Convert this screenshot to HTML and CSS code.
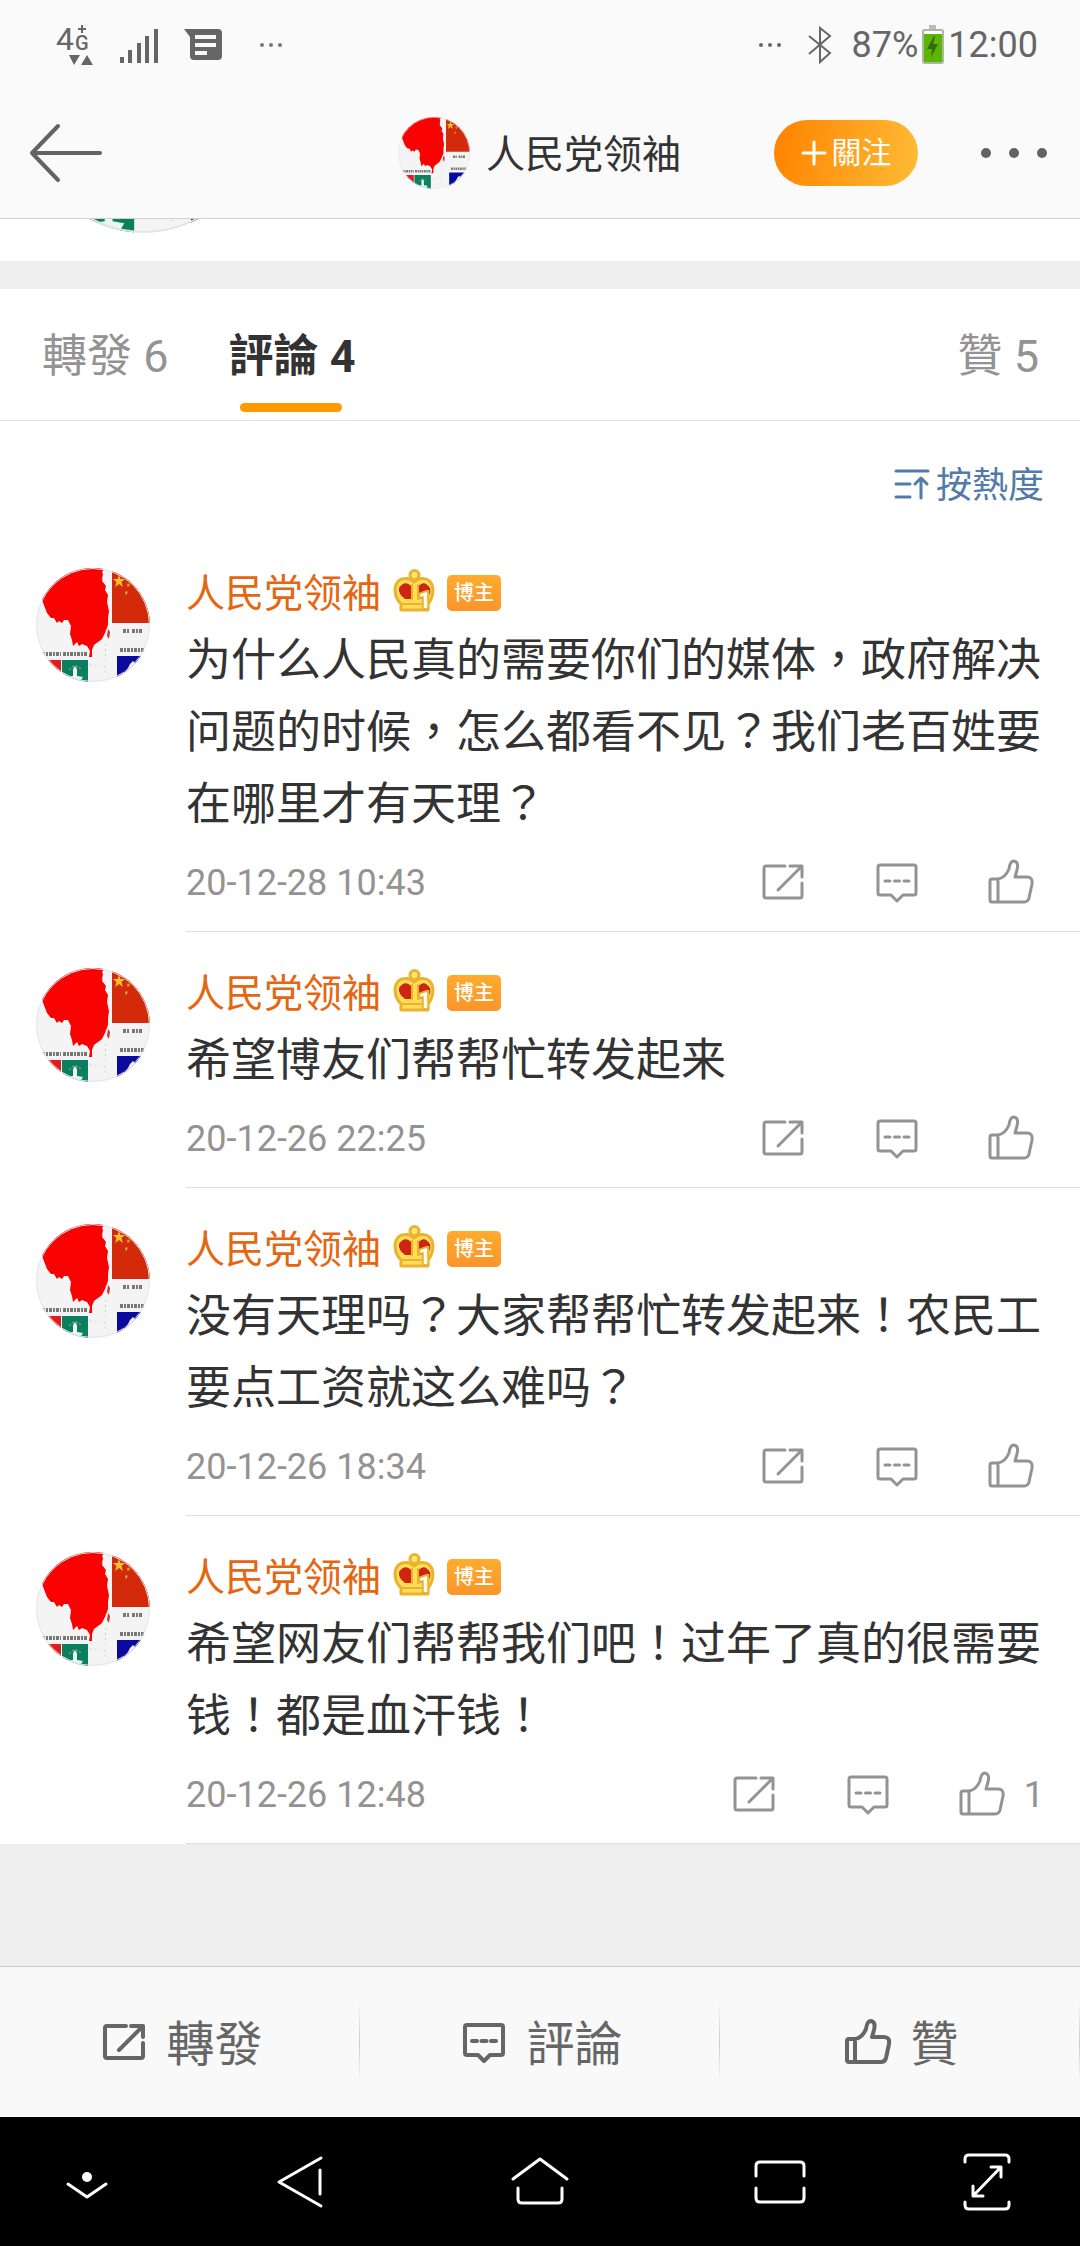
FILE: index.html
```html
<!DOCTYPE html>
<html lang="zh-Hant">
<head>
    <meta charset="UTF-8">
    <meta name="viewport" content="width=device-width, initial-scale=1.0">
    <title>評論</title>
    <link rel="stylesheet" href="styles.css">
</head>
<body>
    <!-- Shared icons -->
    <svg class="sprite" aria-hidden="true">
        <defs>
            <clipPath id="round"><circle cx="57" cy="57" r="57"/></clipPath>
        </defs>
        <symbol id="avatar" viewBox="0 0 114 114">
            <g clip-path="url(#round)">
                <rect width="114" height="114" fill="#f4f4f4"/>
                <path fill="#fa0202" d="M0 0H69L66 4 68 8 66 13 70 18 69 22 72 27 71 34 73 43 72 50 72 57 69 65 66 71 58 77 56 82 56 89 53 89 54 83 51 78 46 76 43 78 41 74 37 78 36 72 34 66 35 58 32 52 28 52 26 55 23 53 21 55 18 50 15 50 11 45 6 32 0 28z"/>
                <path fill="#f4f4f4" d="M68 1L71 2 69 8 71 12 68 13 66 11 67 6z"/>
                <path fill="#c33" d="M72 61L74 64 73 71 71 68z"/>
                <rect x="76" width="38" height="55" fill="#d42a0c"/>
                <path fill="#fbc02d" d="M83 7l1.500 4 4.500 0-3.500 3 1.500 5-4-3-4 3 1.500-5-3.500-3 4.500 0z"/>
                <path fill="#f5a623" d="M92 15l2 2-2 2-1-2zM90 23l2 1-2 3-1-2zM95 9l1 2-2 1z"/>
                <path stroke="#777" stroke-width="4" stroke-dasharray="3 1 2 1" d="M87 63H93M96 63H107M84 82H110M6 86H25M27 86H52" fill="none"/>
                <path fill="#e21b1b" d="M0 92H25V114H0z"/>
                <path fill="#0b8060" d="M26 92H52V114H26z"/>
                <path fill="#e8f7ef" d="M37 101l2-3 2 3v7l6 1-3 5H33l-3-5 7-1z"/>
                <path stroke="#d8c24c" stroke-width="1" stroke-dasharray="2 2" fill="none" d="M33 102Q39 94 46 102"/>
                <path fill="#0a0aa0" d="M81 88H114V114H81z"/>
                <path fill="#f4f4f4" d="M94 96l3-3 3 3 4-1-2 4 2 4-5 1-3 4-3-4-3-1 2-3z"/>
                <path stroke="#ccc" stroke-width="1" stroke-dasharray="2 3" fill="none" d="M54 97L60 98 64 96M70 76L69 92M68 98L71 108"/>
                <circle cx="57" cy="57" r="56.500" fill="none" stroke="#e4e4e4"/>
            </g>
        </symbol>
        <symbol id="repost" viewBox="0 0 48 48">
            <path d="M26 8H7Q5 8 5 10V38Q5 40 7 40H41Q43 40 43 38V25M31 8H43V19M42 9L19 32"/>
        </symbol>
        <symbol id="comment" viewBox="0 0 48 48">
            <path d="M7 7H41Q43 7 43 9V35Q43 37 41 37H30L24 43 18 37H7Q5 37 5 35V9Q5 7 7 7zM12 23H17M21.500 23H26.500M31 23H36"/>
        </symbol>
        <symbol id="like" viewBox="0 0 48 48">
            <path d="M11 44H5Q3 44 3 42V23Q3 21 5 21H11Q18 20 22 11Q23 3 27 3Q32 4 30 12L28 19H40Q46 19 45 26L42 40Q41 44 37 44H11M11 21V44"/>
        </symbol>
        <symbol id="crown" viewBox="0 0 42 43">
            <path fill="#fddf5c" stroke="#ecb22b" stroke-width="3" stroke-linejoin="round" d="M8 41V35Q2 29 2 20Q3 10 12 9.500Q17 9 21 13Q25 9 30 9.500Q39 10 40 20Q40 29 35 35V41z"/>
            <circle cx="21.500" cy="6" r="4.500" fill="#fde873" stroke="#ecb22b" stroke-width="3"/>
            <path fill="#cf2410" d="M19 30H12Q5 25 6 19Q12 10 19 18zM25 30H32Q39 25 37 19Q31 10 25 18z"/>
            <path stroke="#ecb22b" stroke-width="2" fill="none" d="M9 35H34M19 15V31M25 15V31"/>
        </symbol>
    </svg>

    <div class="status-bar">
        <div class="status-left">
            <div class="network">
                <span class="net-4">4</span>
                <span class="net-g">G</span>
                <svg class="net-plus" width="8" height="8" viewBox="0 0 8 8">
                    <path stroke="#666" stroke-width="2" d="M0 4H8M4 0V8"/>
                </svg>
                <svg class="net-arrows" width="24" height="10" viewBox="0 0 24 10">
                    <path fill="#666" d="M0 0H11L5 10zM12 10H24L18 0z"/>
                </svg>
            </div>
            <svg width="40" height="36" viewBox="0 0 40 36">
                <path stroke="#666" stroke-width="4" d="M3 30V36M11 23V36M20 16V36M28 9V36M37 2V36"/>
            </svg>
            <svg width="38" height="32" viewBox="0 0 38 32">
                <path fill="#666" d="M0 0H34Q38 0 38 4V27Q38 31 34 31H10Q6 31 6 27V8z"/>
                <path stroke="#fafafa" stroke-width="4" d="M11 8H32M11 16H32M11 24H23"/>
            </svg>
            <svg width="24" height="6" viewBox="0 0 24 6" fill="#777">
                <circle cx="3" cy="3" r="2"/><circle cx="12" cy="3" r="2"/><circle cx="21" cy="3" r="2"/>
            </svg>
        </div>
        <div class="status-right">
            <svg width="24" height="6" viewBox="0 0 24 6" fill="#666">
                <circle cx="3" cy="3" r="2"/><circle cx="12" cy="3" r="2"/><circle cx="21" cy="3" r="2"/>
            </svg>
            <svg class="bluetooth" width="24" height="38" viewBox="0 0 24 38">
                <path stroke="#666" stroke-width="2" fill="none" d="M1 10L22 27 12 36V2L22 10 1 28"/>
            </svg>
            <span>87%</span>
            <svg class="battery" width="22" height="40" viewBox="0 0 22 40">
                <rect x="7" y="0" width="7" height="4" fill="#bbb"/>
                <rect x="1" y="5" width="20" height="33" rx="2" fill="#fff" stroke="#adb5a4" stroke-width="2"/>
                <rect x="2" y="9" width="18" height="28" fill="#5cb500"/>
                <path fill="#2f6b10" d="M12 11L5 24H10L9 32 16 19H11L13 11z"/>
            </svg>
            <span>12:00</span>
        </div>
    </div>

    <header class="header">
        <button class="icon-btn" aria-label="返回">
            <svg width="74" height="60" viewBox="0 0 74 60">
                <path stroke="#636363" stroke-width="4" stroke-linecap="round" stroke-linejoin="round" fill="none" d="M29 3L3 30 29 57M3 30H71"/>
            </svg>
        </button>
        <a class="author" href="#">
            <svg width="72" height="72"><use href="#avatar"/></svg>
            <h1>人民党领袖</h1>
        </a>
        <div class="header-actions">
            <button class="follow-btn">
                <svg width="26" height="26" viewBox="0 0 26 26">
                    <path stroke="#fff" stroke-width="3" stroke-linecap="round" d="M2 13H24M13 2V24"/>
                </svg>
                <span>關注</span>
            </button>
            <button class="icon-btn" aria-label="更多">
                <svg width="68" height="12" viewBox="0 0 68 12" fill="#636363">
                    <circle cx="6" cy="6" r="5"/><circle cx="34" cy="6" r="5"/><circle cx="62" cy="6" r="5"/>
                </svg>
            </button>
        </div>
    </header>

    <div class="post-tail">
        <svg width="224" height="224"><use href="#avatar"/></svg>
    </div>

    <nav class="tabs">
        <a class="tab" href="#">轉發 6</a>
        <a class="tab active" href="#">評論 4</a>
        <a class="tab likes" href="#">贊 5</a>
    </nav>

    <main class="comments">
        <button class="sort-btn">
            <svg width="36" height="34" viewBox="0 0 36 34">
                <path stroke="#527ba8" stroke-width="3" stroke-linecap="round" stroke-linejoin="round" fill="none" d="M2 4H34M2 17H16M2 30H16M27 31V12M21 17L27 11 33 17"/>
            </svg>
            <span>按熱度</span>
        </button>

        <article class="comment">
            <svg class="avatar"><use href="#avatar"/></svg>
            <div class="body">
                <div class="name">
                    <a href="#">人民党领袖</a>
                    <span class="crown"><svg><use href="#crown"/></svg><b>1</b></span>
                    <span class="badge">博主</span>
                </div>
                <p>为什么人民真的需要你们的媒体，政府解决问题的时候，怎么都看不见？我们老百姓要在哪里才有天理？</p>
                <div class="meta">
                    <time>20-12-28 10:43</time>
                    <button aria-label="轉發"><svg class="icon"><use href="#repost"/></svg></button>
                    <button aria-label="評論"><svg class="icon"><use href="#comment"/></svg></button>
                    <button class="like" aria-label="贊"><svg class="icon"><use href="#like"/></svg></button>
                </div>
            </div>
        </article>

        <article class="comment">
            <svg class="avatar"><use href="#avatar"/></svg>
            <div class="body">
                <div class="name">
                    <a href="#">人民党领袖</a>
                    <span class="crown"><svg><use href="#crown"/></svg><b>1</b></span>
                    <span class="badge">博主</span>
                </div>
                <p>希望博友们帮帮忙转发起来</p>
                <div class="meta">
                    <time>20-12-26 22:25</time>
                    <button aria-label="轉發"><svg class="icon"><use href="#repost"/></svg></button>
                    <button aria-label="評論"><svg class="icon"><use href="#comment"/></svg></button>
                    <button class="like" aria-label="贊"><svg class="icon"><use href="#like"/></svg></button>
                </div>
            </div>
        </article>

        <article class="comment">
            <svg class="avatar"><use href="#avatar"/></svg>
            <div class="body">
                <div class="name">
                    <a href="#">人民党领袖</a>
                    <span class="crown"><svg><use href="#crown"/></svg><b>1</b></span>
                    <span class="badge">博主</span>
                </div>
                <p>没有天理吗？大家帮帮忙转发起来！农民工要点工资就这么难吗？</p>
                <div class="meta">
                    <time>20-12-26 18:34</time>
                    <button aria-label="轉發"><svg class="icon"><use href="#repost"/></svg></button>
                    <button aria-label="評論"><svg class="icon"><use href="#comment"/></svg></button>
                    <button class="like" aria-label="贊"><svg class="icon"><use href="#like"/></svg></button>
                </div>
            </div>
        </article>

        <article class="comment">
            <svg class="avatar"><use href="#avatar"/></svg>
            <div class="body">
                <div class="name">
                    <a href="#">人民党领袖</a>
                    <span class="crown"><svg><use href="#crown"/></svg><b>1</b></span>
                    <span class="badge">博主</span>
                </div>
                <p>希望网友们帮帮我们吧！过年了真的很需要钱！都是血汗钱！</p>
                <div class="meta">
                    <time>20-12-26 12:48</time>
                    <button aria-label="轉發"><svg class="icon"><use href="#repost"/></svg></button>
                    <button aria-label="評論"><svg class="icon"><use href="#comment"/></svg></button>
                    <button class="like" aria-label="贊"><svg class="icon"><use href="#like"/></svg><span>1</span></button>
                </div>
            </div>
        </article>
    </main>

    <footer class="toolbar">
        <button><svg class="icon"><use href="#repost"/></svg><span>轉發</span></button>
        <button><svg class="icon"><use href="#comment"/></svg><span>評論</span></button>
        <button><svg class="icon"><use href="#like"/></svg><span>贊</span></button>
    </footer>

    <nav class="system-nav">
        <button aria-label="隱藏">
            <svg width="44" height="56" viewBox="0 0 44 56">
                <circle cx="22" cy="23" r="5" fill="#fff" stroke="none"/><path d="M3 30L22 43 41 30"/>
            </svg>
        </button>
        <button aria-label="返回">
            <svg width="48" height="56" viewBox="0 0 48 56"><path d="M45 4L3 28 45 52M44 16V40"/></svg>
        </button>
        <button aria-label="主畫面">
            <svg width="60" height="56" viewBox="0 0 60 56"><path d="M3 25L30 5 57 25M8 34V45Q8 49 12 49H48Q52 49 52 45V34"/></svg>
        </button>
        <button aria-label="最近">
            <svg width="54" height="56" viewBox="0 0 54 56"><path d="M3 22V12Q3 8 7 8H47Q51 8 51 12V22M3 34V44Q3 48 7 48H47Q51 48 51 44V34"/></svg>
        </button>
        <button aria-label="全螢幕">
            <svg width="50" height="60" viewBox="0 0 50 60"><path d="M3 10V7Q3 3 7 3H43Q47 3 47 7V10M3 50V53Q3 57 7 57H43Q47 57 47 53V50M11 44L39 15M29 15H39V25M11 34V44H21"/></svg>
        </button>
    </nav>
</body>
</html>
```
FILE: styles.css
```css
* {
    margin: 0;
    padding: 0;
    box-sizing: border-box;
}

body {
    font-family: Roboto, "Noto Sans CJK TC", sans-serif;
    background: #eee;
    color: #333;
    min-height: 100vh;
    display: flex;
    flex-direction: column;
}

a {
    color: inherit;
    text-decoration: none;
}

button {
    font: inherit;
    color: inherit;
    background: none;
    border: none;
    cursor: pointer;
}

svg {
    display: block;
    flex-shrink: 0;
}

.sprite {
    position: absolute;
    width: 0;
    height: 0;
}

/* Status bar */
.status-bar {
    display: flex;
    justify-content: space-between;
    align-items: center;
    height: 90px;
    padding: 0 42px 0 56px;
    background: #fafafa;
    color: #666;
    font-size: 36px;
}

.status-left {
    display: flex;
    align-items: center;
    gap: 25px;
}

.status-left svg:last-child {
    margin-left: 12px;
}

.network {
    display: grid;
    grid-template-columns: 19px 19px;
    grid-template-rows: 30px 10px;
    align-items: end;
    position: relative;
}

.net-4 {
    font-size: 32px;
    line-height: 32px;
}

.net-g {
    font-size: 20px;
    font-weight: 500;
    line-height: 24px;
}

.net-plus {
    position: absolute;
    top: 0;
    right: 8px;
}

.net-arrows {
    grid-column: 1 / 3;
    justify-self: center;
}

.status-right {
    display: flex;
    align-items: center;
}

.bluetooth {
    margin: 0 20px 0 26px;
}

.battery {
    margin: 0 4px;
}

/* Header */
.header {
    display: grid;
    grid-template-columns: 1fr auto 1fr;
    align-items: center;
    height: 129px;
    padding: 0 32px 3px 29px;
    background: #fafafa;
    border-bottom: 1px solid #d0d0d0;
}

.icon-btn {
    justify-self: start;
}

.author {
    display: flex;
    align-items: center;
    gap: 16px;
    padding-left: 2px;
}

.author h1 {
    padding-bottom: 3px;
    font-size: 39px;
    font-weight: 400;
}

.header-actions {
    display: flex;
    align-items: center;
    justify-content: flex-end;
    gap: 62px;
}

.follow-btn {
    display: flex;
    align-items: center;
    justify-content: center;
    gap: 5px;
    width: 144px;
    height: 66px;
    border-radius: 33px;
    background: linear-gradient(100deg, #ff8200, #ffbc35);
    color: #fff;
    font-size: 30px;
}

.follow-btn span,
.sort-btn span,
.toolbar span {
    padding-bottom: 5px;
}

/* Bottom edge of the post above the comments */
.post-tail {
    display: flex;
    align-items: flex-end;
    height: 42px;
    padding: 0 32px 28px;
    background: #fff;
    overflow: hidden;
}

/* Tabs */
.tabs {
    display: flex;
    gap: 60px;
    height: 132px;
    margin-top: 28px;
    padding: 2px 41px 0 42px;
    background: #fff;
    border-bottom: 1px solid #e3e3e3;
    color: #939393;
    font-size: 45px;
    line-height: 132px;
}

.tab.active {
    position: relative;
    color: #333;
    font-weight: 700;
}

.tab.active::after {
    content: "";
    position: absolute;
    left: 50%;
    bottom: 8px;
    width: 102px;
    height: 9px;
    margin-left: -52px;
    border-radius: 5px;
    background: #ff9900;
}

.tab.likes {
    margin-left: auto;
}

/* Comments */
.comments {
    background: #fff;
}

.sort-btn {
    display: flex;
    align-items: center;
    gap: 6px;
    height: 111px;
    margin-left: auto;
    padding: 15px 36px 0 0;
    color: #527ba8;
    font-size: 36px;
}

.comment {
    display: flex;
    gap: 36px;
    padding-left: 36px;
}

.avatar {
    width: 114px;
    height: 114px;
    margin-top: 36px;
}

.body {
    flex: 1;
    padding: 32px 36px 0 0;
    border-bottom: 1px solid #ddd;
}

.name {
    display: flex;
    align-items: center;
    height: 61px;
    padding-bottom: 3px;
    color: #e66610;
    font-size: 39px;
}

.name a {
    padding-bottom: 6px;
}

.crown {
    position: relative;
    margin: 0 12px;
    padding-bottom: 6px;
}

.crown svg {
    width: 42px;
    height: 43px;
}

.crown b {
    position: absolute;
    right: 4px;
    bottom: 5px;
    color: #fff;
    font-size: 22px;
    line-height: 24px;
    -webkit-text-stroke: 4px #ecb22b;
    paint-order: stroke fill;
}

.badge {
    padding: 0 7px;
    border-radius: 5px;
    background: linear-gradient(#ffab2e, #f9952a);
    color: #fff;
    font-size: 20px;
    font-weight: 500;
    line-height: 36px;
}

.body p {
    font-size: 45px;
    line-height: 72px;
}

.meta {
    display: flex;
    align-items: center;
    gap: 66px;
    height: 90px;
    padding-bottom: 6px;
    color: #939393;
    font-size: 36px;
}

.meta time {
    margin-right: auto;
}

.icon {
    width: 48px;
    height: 48px;
    fill: none;
    stroke: currentColor;
    stroke-width: 3px;
    stroke-linecap: round;
    stroke-linejoin: round;
}

.meta .icon {
    margin-bottom: 3px;
}

.like {
    display: flex;
    align-items: center;
    gap: 18px;
    min-width: 57px;
}

/* Bottom bars */
.toolbar {
    display: grid;
    grid-template-columns: repeat(3, 1fr);
    height: 151px;
    margin-top: auto;
    background: #f9f9f9;
    border-top: 1px solid #c8c8c8;
    color: #666;
    font-size: 48px;
}

.toolbar button {
    display: flex;
    align-items: center;
    justify-content: center;
    gap: 18px;
    padding-left: 3px;
    background: linear-gradient(transparent, #ccc, transparent) right center / 1px 84px no-repeat;
}

.toolbar .icon {
    stroke-width: 4px;
}

.system-nav {
    display: grid;
    grid-template-columns: 174px 252fr 228fr 252fr 162px;
    height: 129px;
    padding-right: 12px;
    background: #000;
}

.system-nav button {
    display: flex;
    align-items: center;
    justify-content: center;
}

.system-nav svg {
    fill: none;
    stroke: #fff;
    stroke-width: 3px;
    stroke-linecap: round;
    stroke-linejoin: round;
}
```
